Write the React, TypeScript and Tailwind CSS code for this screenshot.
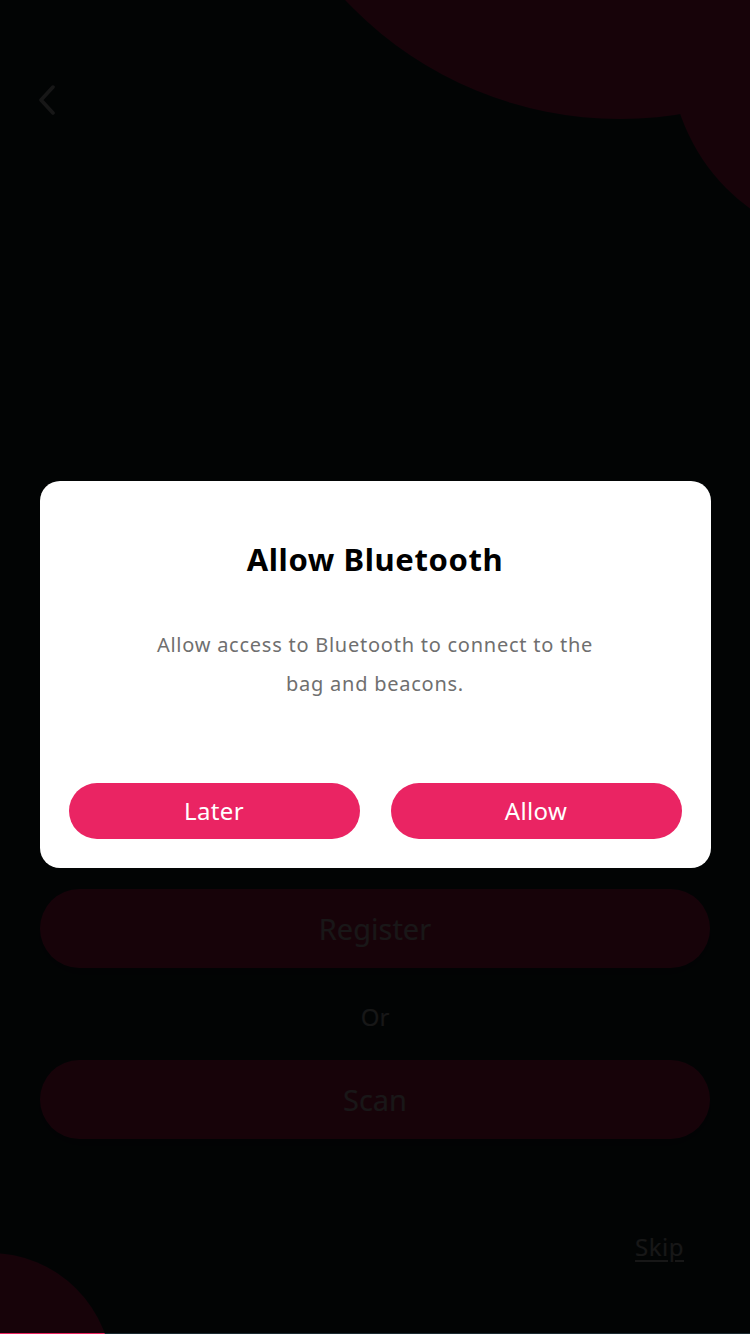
import React from "react";

const font = { fontFamily: '"Noto Sans", "Open Sans", sans-serif' };

export default function App() {
  return (
    <div
      className="relative w-[750px] h-[1334px] overflow-hidden bg-[#1b2a31]"
      style={font}
    >
      {/* decorative background circles */}
      <div className="absolute left-[243px] top-[-635px] w-[754px] h-[754px] rounded-full bg-[#e9245f]" />
      <div className="absolute left-[670px] top-[-141px] w-[386px] h-[386px] rounded-full bg-[#e9245f]" />
      <div className="absolute left-[-132px] top-[1253px] w-[244px] h-[244px] rounded-full bg-[#e9245f]" />

      {/* underlying page */}
      <div className="relative flex flex-col px-10">
        <div className="pt-[85px] -ml-[4px]">
          <svg width="22" height="30" viewBox="0 0 22 30" fill="none">
            <path
              d="M17 2 L5 15 L17 28"
              stroke="#ffffff"
              strokeOpacity="0.9"
              strokeWidth="3.5"
              strokeLinecap="round"
              strokeLinejoin="round"
            />
          </svg>
        </div>
        <div className="mt-[774px] h-[79px] rounded-full bg-[#e9245f] flex items-center justify-center text-[29px] text-white/90 shadow-lg">
          Register
        </div>
        <div className="h-[92px] pt-[6px] flex items-center justify-center text-[24px] text-white/90">
          Or
        </div>
        <div className="h-[79px] rounded-full bg-[#e9245f] flex items-center justify-center text-[29px] text-white/90 shadow-lg">
          Scan
        </div>
        <div className="mt-[90px] flex justify-end pr-[26px]">
          <span className="text-[24px] tracking-[0.5px] text-white/90 underline underline-offset-4">Skip</span>
        </div>
      </div>

      {/* dimming overlay + dialog */}
      <div className="absolute left-0 top-0 w-[750px] h-[1333px] bg-black/90 flex flex-col items-center pt-[481px]">
        <div className="w-[671px] h-[387px] bg-white rounded-[20px] flex flex-col items-center px-[29px]">
          <div className="mt-[58px] text-[31px] font-bold text-black leading-[40px] tracking-[0.6px]">
            Allow Bluetooth
          </div>
          <div className="mt-[46px] w-[480px] text-center text-[20px] leading-[39px] tracking-[0.75px] text-[#6f6f6f]">
            Allow access to Bluetooth to connect to the
            <br />
            bag and beacons.
          </div>
          <div className="mt-[80px] w-full flex gap-[31px]">
            <button className="flex-1 h-[56px] rounded-full bg-[#ea2463] text-white text-[24px] tracking-[0.4px] flex items-center justify-center">
              Later
            </button>
            <button className="flex-1 h-[56px] rounded-full bg-[#ea2463] text-white text-[24px] tracking-[0.4px] flex items-center justify-center">
              Allow
            </button>
          </div>
        </div>
      </div>
    </div>
  );
}
